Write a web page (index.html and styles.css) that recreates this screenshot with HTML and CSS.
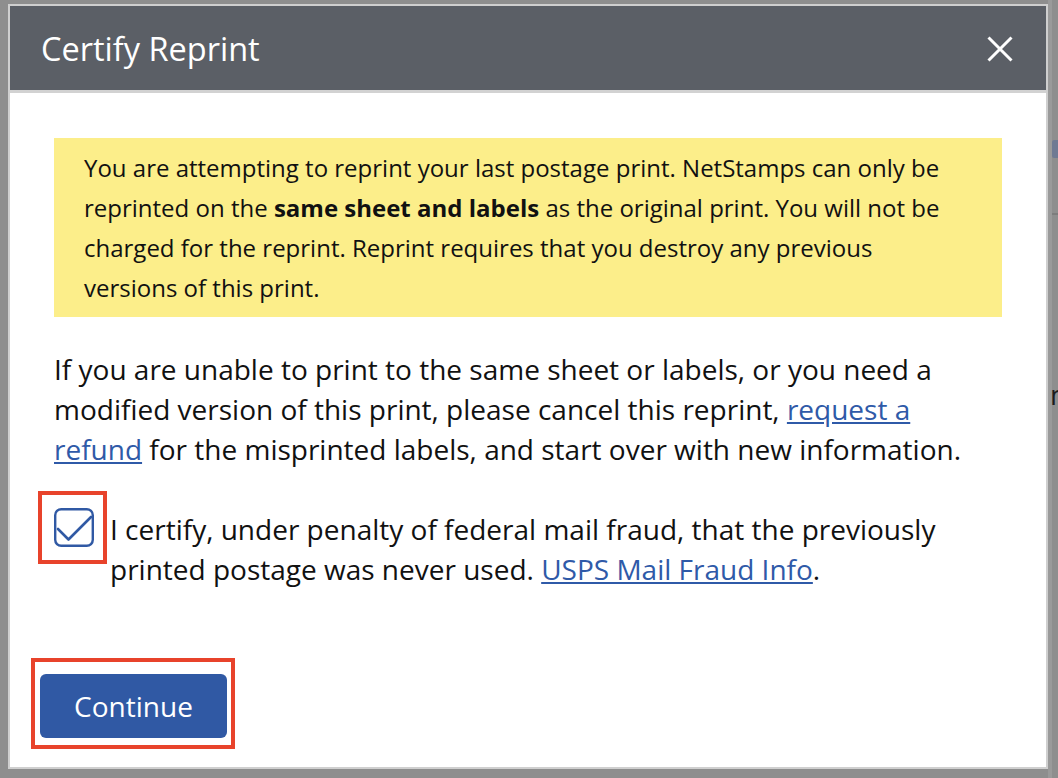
FILE: index.html
```html
<!DOCTYPE html>
<html lang="en">
<head>
<meta charset="UTF-8">
<meta name="viewport" content="width=device-width, initial-scale=1.0">
<title>Certify Reprint</title>
<link rel="stylesheet" href="styles.css">
</head>
<body>

<div class="page-peek">
  <div class="peek-icon"></div>
  <div class="peek-rule"></div>
  <div class="peek-text">m</div>
</div>

<div class="modal">
  <div class="modal-header">
    <h1 class="modal-title">Certify Reprint</h1>
    <button class="close-btn" aria-label="Close">
      <svg width="26" height="26" viewBox="0 0 26 26">
        <path d="M1.5 1.5 L24.5 24.5 M24.5 1.5 L1.5 24.5" stroke="#fff" stroke-width="3" fill="none"/>
      </svg>
    </button>
  </div>

  <div class="modal-body">
    <div class="notice">
      You are attempting to reprint your last postage print. NetStamps can only be reprinted on the <b>same sheet and labels</b> as the original print. You will not be charged for the reprint. Reprint requires that you destroy any previous versions of this print.
    </div>

    <p class="info">
      If you are unable to print to the same sheet or labels, or you need a modified version of this print, please cancel this reprint, <a href="#">request a refund</a> for the misprinted labels, and start over with new information.
    </p>

    <label class="certify">
      <span class="checkbox">
        <svg width="40" height="40" viewBox="0 0 40 40">
          <rect x="1.2" y="1.2" width="37.6" height="36.6" rx="6" fill="#fff" stroke="#3059a4" stroke-width="2.4"/>
          <path d="M4 21 L14.5 31.5 L37 9" stroke="#3059a4" stroke-width="2.6" fill="none" stroke-linecap="round" stroke-linejoin="round"/>
        </svg>
        <span class="highlight hl-check"></span>
      </span>
      <span class="certify-text">I certify, under penalty of federal mail fraud, that the previously printed postage was never used. <a href="#">USPS Mail Fraud Info</a>.</span>
    </label>
  </div>

  <div class="modal-footer">
    <button class="continue-btn">
      Continue
      <span class="highlight hl-btn"></span>
    </button>
  </div>
</div>

</body>
</html>
```

FILE: styles.css
```css
body {
  margin: 0;
  padding: 0;
  height: 778px;
  overflow: hidden;
  background: #8e8e8e;
  font-family: 'Open Sans', 'Noto Sans', sans-serif;
  color: #111;
}

/* bits of the page behind the overlay */
.page-peek {
  position: absolute;
  top: 0;
  left: 1048px;
  width: 10px;
  height: 778px;
  border-left: 4px solid #9a9a9a;
  box-sizing: border-box;
}

.peek-icon {
  position: absolute;
  top: 140px;
  left: 0;
  width: 8px;
  height: 18px;
  background: #6f7a93;
  border-radius: 2px;
}

.peek-rule {
  position: absolute;
  top: 213px;
  left: 0;
  width: 10px;
  height: 2px;
  background: #7d7d7d;
}

.peek-text {
  position: absolute;
  top: 374px;
  left: -2px;
  font-size: 28px;
  line-height: 40px;
  color: #1c1c1c;
}

.modal {
  position: relative;
  margin: 4px 0 0 8px;
  width: 1040px;
  height: 765px;
  box-sizing: border-box;
  background: #fff;
  border: 2px solid #cfcfcf;
}

.modal-header {
  height: 84px;
  display: flex;
  align-items: center;
  justify-content: space-between;
  padding: 0 33px 0 31px;
  background: #5b5f66;
  border-bottom: 3px solid #d2d2d2;
}

.modal-title {
  margin: 0;
  font-size: 32.5px;
  font-weight: 400;
  color: #fff;
  padding-top: 1px;
}

.close-btn {
  background: none;
  border: none;
  padding: 0;
  width: 26px;
  height: 26px;
  cursor: pointer;
  margin-top: 1px;
}

.modal-body {
  padding: 45px 44px 0 44px;
}

.notice {
  background: #fcee8a;
  padding: 10px 50px 9px 30px;
  font-size: 24px;
  line-height: 40px;
}

.notice b {
  font-weight: 700;
}

.info {
  margin: 32px 0 0;
  font-size: 28px;
  line-height: 40px;
}

a {
  color: #2f5aa8;
  text-decoration: underline;
}

.certify {
  display: flex;
  align-items: flex-start;
  gap: 16px;
  margin-top: 40px;
  font-size: 28px;
  line-height: 40px;
}

.checkbox {
  position: relative;
  flex: none;
  width: 40px;
  height: 40px;
  margin-top: -1px;
}

.checkbox svg {
  display: block;
}

.highlight {
  position: absolute;
  border: 4px solid #e8432b;
  pointer-events: none;
}

.hl-check {
  left: -16px;
  right: -13px;
  top: -17px;
  bottom: -16px;
}

.modal-footer {
  padding: 85px 0 0 30px;
}

.continue-btn {
  position: relative;
  width: 187px;
  height: 64px;
  background: #3059a4;
  color: #fff;
  border: none;
  border-radius: 6px;
  font-family: 'Open Sans', 'Noto Sans', sans-serif;
  font-size: 28px;
  padding: 0;
}

.hl-btn {
  left: -9px;
  right: -8px;
  top: -16px;
  bottom: -11px;
}
```
